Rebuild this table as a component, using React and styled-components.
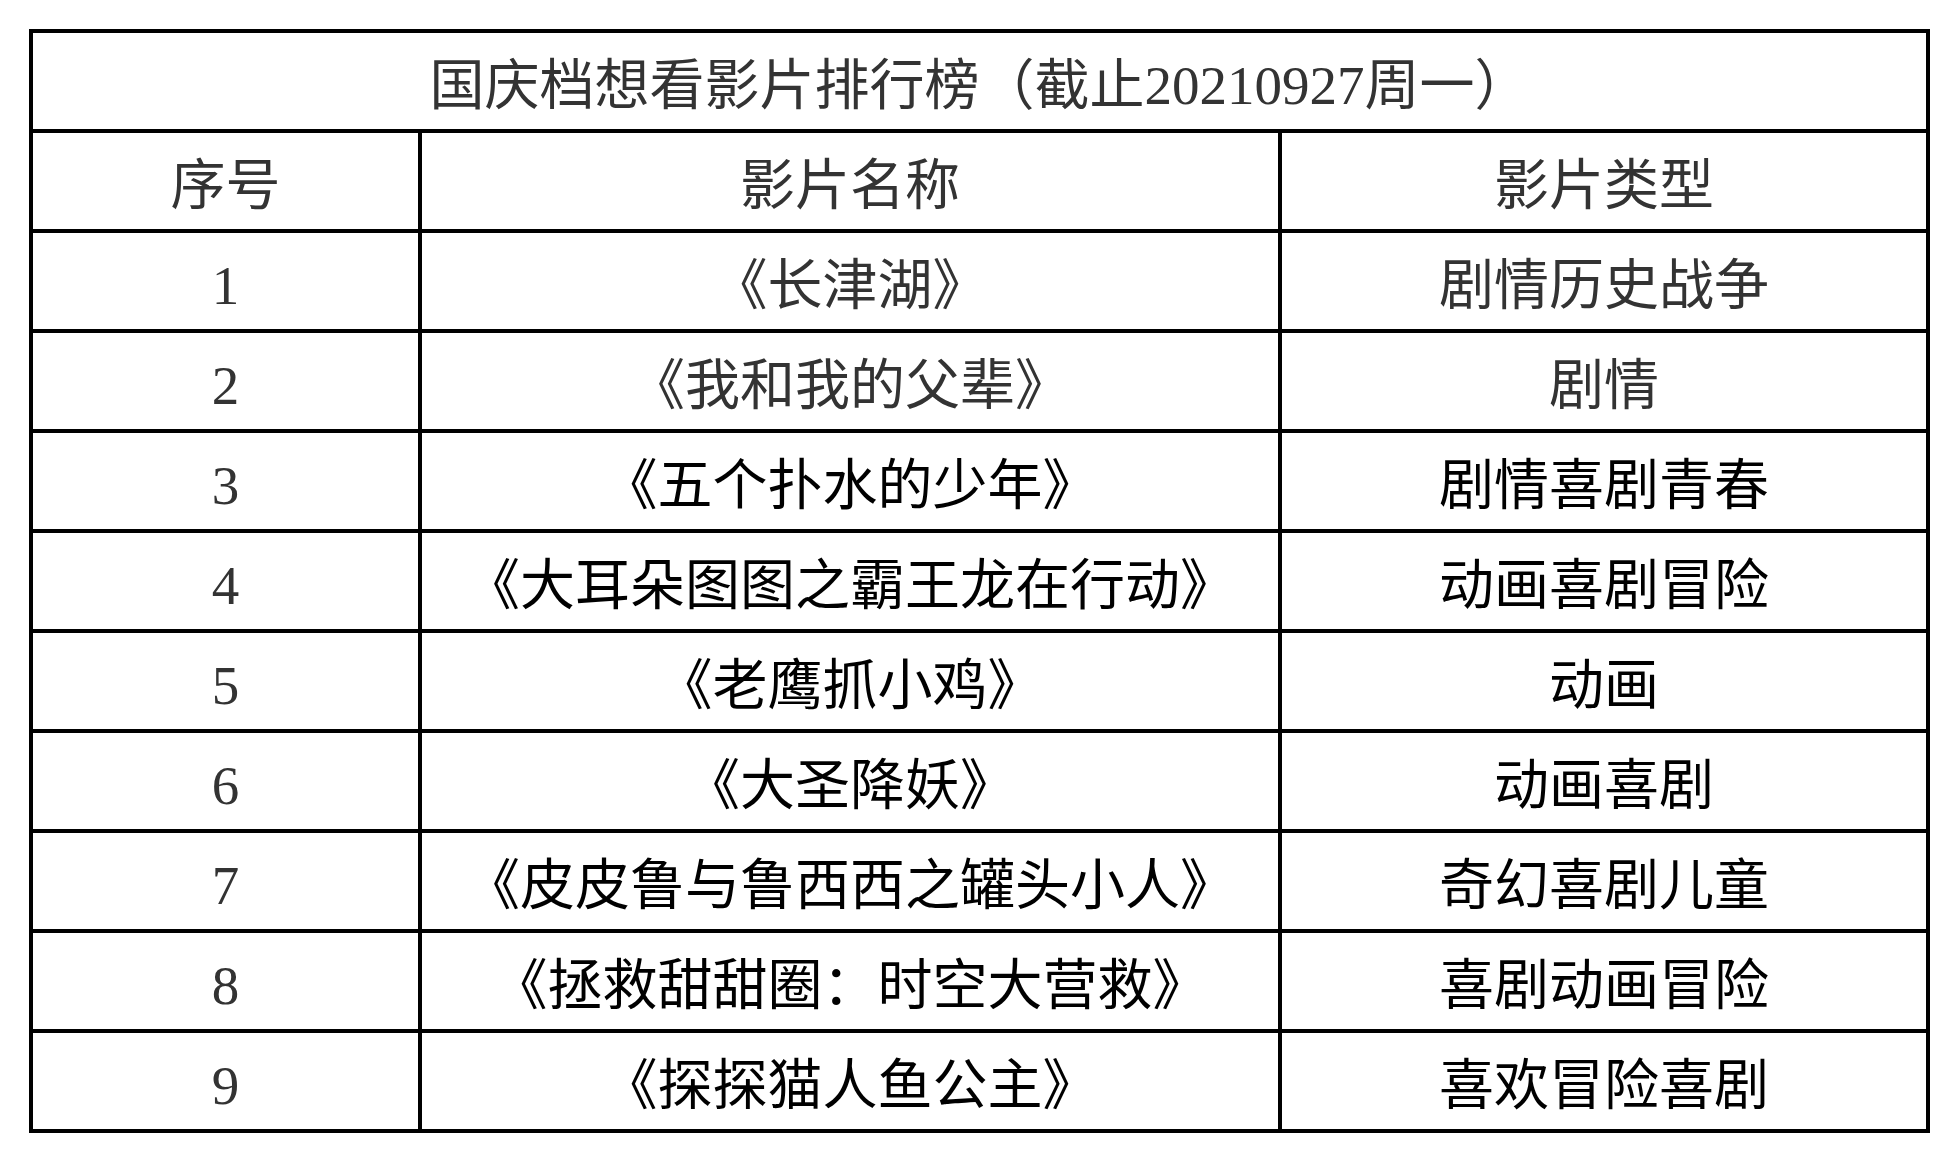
import React from 'react';
import styled, { createGlobalStyle } from 'styled-components';

const GlobalStyle = createGlobalStyle`
	html, body {
		margin: 0;
		padding: 0;
		background: #fff;
	}
	body {
		font-family: "Liberation Serif", "Noto Sans CJK SC", serif;
	}
`

const Page = styled.div`
	padding: 29px 0 0 29px;
`

const Table = styled.div`
	display: grid;
	grid-template-columns: 385px 856px 644px;
	grid-auto-rows: 96px;
	gap: 4px;
	width: fit-content;
	background: #000;
	border: 4px solid #000;
`

const Cell = styled.div`
	display: flex;
	align-items: center;
	justify-content: center;
	background: #fff;
	font-size: 55px;
	line-height: 1;
	white-space: nowrap;
	color: ${p => (p.$dark ? '#000' : '#333')};
	padding-top: 8px;
	box-sizing: border-box;
`

const Title = styled(Cell)`
	grid-column: 1 / -1;
	padding-top: 8px;
`

const movies = [
	{ name: '《长津湖》', type: '剧情历史战争' },
	{ name: '《我和我的父辈》', type: '剧情' },
	{ name: '《五个扑水的少年》', type: '剧情喜剧青春' },
	{ name: '《大耳朵图图之霸王龙在行动》', type: '动画喜剧冒险' },
	{ name: '《老鹰抓小鸡》', type: '动画' },
	{ name: '《大圣降妖》', type: '动画喜剧' },
	{ name: '《皮皮鲁与鲁西西之罐头小人》', type: '奇幻喜剧儿童' },
	{ name: '《拯救甜甜圈：时空大营救》', type: '喜剧动画冒险' },
	{ name: '《探探猫人鱼公主》', type: '喜欢冒险喜剧' },
]

export default function App() {
	return (
		<Page>
			<GlobalStyle />
			<Table>
				<Title>国庆档想看影片排行榜（截止20210927周一）</Title>
				<Cell>序号</Cell>
				<Cell>影片名称</Cell>
				<Cell>影片类型</Cell>
				{movies.map((m, i) => (
					<React.Fragment key={i}>
						<Cell>{i + 1}</Cell>
						<Cell $dark={i >= 2}>{m.name}</Cell>
						<Cell $dark={i >= 2}>{m.type}</Cell>
					</React.Fragment>
				))}
			</Table>
		</Page>
	);
}
